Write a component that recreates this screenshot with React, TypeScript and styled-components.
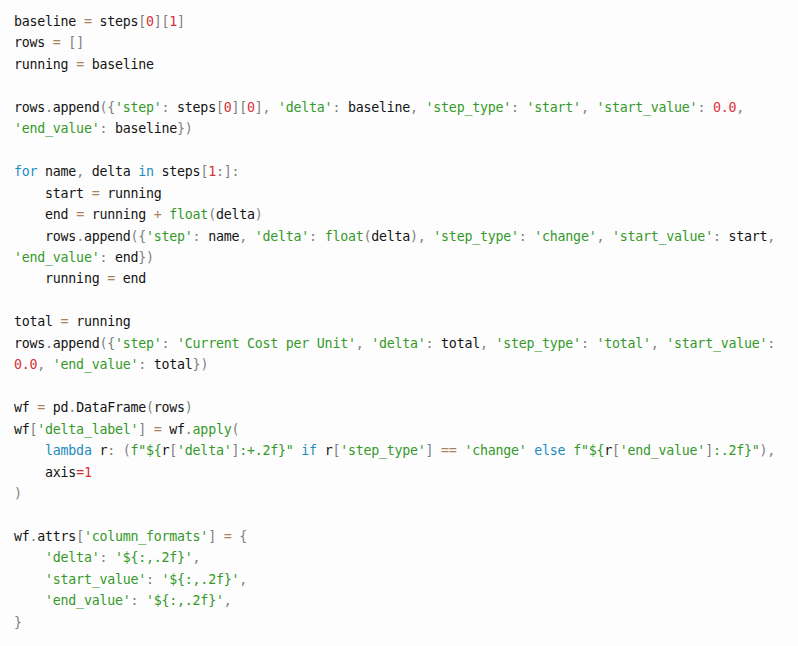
import React from "react";
import styled, { createGlobalStyle } from "styled-components";

const Global = createGlobalStyle`
  html, body {
    margin: 0;
    padding: 0;
    background: #fdfdfd;
  }
`;

const CODE = `baseline = steps[0][1]
rows = []
running = baseline

rows.append({'step': steps[0][0], 'delta': baseline, 'step_type': 'start', 'start_value': 0.0, 'end_value': baseline})

for name, delta in steps[1:]:
    start = running
    end = running + float(delta)
    rows.append({'step': name, 'delta': float(delta), 'step_type': 'change', 'start_value': start, 'end_value': end})
    running = end

total = running
rows.append({'step': 'Current Cost per Unit', 'delta': total, 'step_type': 'total', 'start_value': 0.0, 'end_value': total})

wf = pd.DataFrame(rows)
wf['delta_label'] = wf.apply(
    lambda r: (f"\${r['delta']:+.2f}" if r['step_type'] == 'change' else f"\${r['end_value']:.2f}"),
    axis=1
)

wf.attrs['column_formats'] = {
    'delta': '\${:,.2f}',
    'start_value': '\${:,.2f}',
    'end_value': '\${:,.2f}',
}`;

type Kind = "plain" | "kw" | "str" | "num" | "op" | "punc" | "builtin" | "kwarg";
type Tok = { k: Kind; t: string };

const KEYWORDS = new Set(["for", "in", "lambda", "if", "else"]);
const BUILTINS = new Set(["float", "apply"]);

function tokenize(src: string): Tok[] {
  const out: Tok[] = [];
  let i = 0;
  while (i < src.length) {
    const c = src[i];
    if (c === " ") {
      let j = i;
      while (j < src.length && src[j] === " ") j++;
      out.push({ k: "plain", t: src.slice(i, j) });
      i = j;
      continue;
    }
    if (c === "f" && src[i + 1] === '"') {
      let j = i + 2;
      let buf = 'f"';
      while (j < src.length && src[j] !== '"') {
        if (src[j] === "{") {
          buf += "{";
          out.push({ k: "str", t: buf });
          buf = "";
          j++;
          let depth = 0;
          let inStr = false;
          let k = j;
          while (k < src.length) {
            const ch = src[k];
            if (inStr) {
              if (ch === "'") inStr = false;
            } else if (ch === "'") inStr = true;
            else if (ch === "[" || ch === "(") depth++;
            else if (ch === "]" || ch === ")") depth--;
            else if ((ch === ":" || ch === "}") && depth === 0) break;
            k++;
          }
          out.push(...tokenize(src.slice(j, k)));
          j = k;
          while (j < src.length && src[j] !== "}") {
            buf += src[j];
            j++;
          }
          buf += "}";
          j++;
        } else {
          buf += src[j];
          j++;
        }
      }
      buf += '"';
      out.push({ k: "str", t: buf });
      i = j + 1;
      continue;
    }
    if (c === "'") {
      let j = i + 1;
      while (j < src.length && src[j] !== "'") j++;
      out.push({ k: "str", t: src.slice(i, j + 1) });
      i = j + 1;
      continue;
    }
    if (/[0-9]/.test(c)) {
      const m = /^\d+(\.\d+)?/.exec(src.slice(i))!;
      out.push({ k: "num", t: m[0] });
      i += m[0].length;
      continue;
    }
    if (/[A-Za-z_]/.test(c)) {
      const m = /^[A-Za-z_][A-Za-z0-9_]*/.exec(src.slice(i))!;
      const w = m[0];
      const next = src.slice(i + w.length);
      if (KEYWORDS.has(w)) out.push({ k: "kw", t: w });
      else if (BUILTINS.has(w)) out.push({ k: "builtin", t: w });
      else if (/^=[^=]/.test(next) && w === "axis") {
        out.push({ k: "plain", t: w });
        out.push({ k: "kwarg", t: "=" });
        i += 1;
      } else out.push({ k: "plain", t: w });
      i += w.length;
      continue;
    }
    if (c === "=" && src[i + 1] === "=") {
      out.push({ k: "op", t: "==" });
      i += 2;
      continue;
    }
    if (c === "=" || c === "+") {
      out.push({ k: "op", t: c });
      i++;
      continue;
    }
    out.push({ k: "punc", t: c });
    i++;
  }
  return out;
}

const COLORS: Record<Kind, string> = {
  plain: "#141414",
  kw: "#1d8cc0",
  str: "#35992a",
  num: "#d7303b",
  op: "#a8835c",
  punc: "#808080",
  builtin: "#35992a",
  kwarg: "#d7303b",
};

const Page = styled.main`
  padding: 11px 14px 10px;
  font-family: "DejaVu Sans Mono", "Liberation Mono", monospace;
  font-size: 13.3px;
  letter-spacing: -0.24px;
  line-height: 21.46px;
  color: #141414;
  background: #fdfdfd;
`;

const CodeBlock = styled.pre`
  margin: 0;
  width: 780px;
  font: inherit;
  letter-spacing: inherit;
`;

const Line = styled.div`
  white-space: pre-wrap;
  min-height: 21.46px;
`;

const Token = styled.span<{ $kind: Kind }>`
  color: ${(p) => COLORS[p.$kind]};
`;

export default function App() {
  const lines = CODE.split("\n");
  return (
    <>
      <Global />
      <Page>
        <CodeBlock>
          <code>
            {lines.map((ln, i) => (
              <Line key={i}>
                {tokenize(ln).map((tk, j) => (
                  <Token key={j} $kind={tk.k}>
                    {tk.t}
                  </Token>
                ))}
              </Line>
            ))}
          </code>
        </CodeBlock>
      </Page>
    </>
  );
}
